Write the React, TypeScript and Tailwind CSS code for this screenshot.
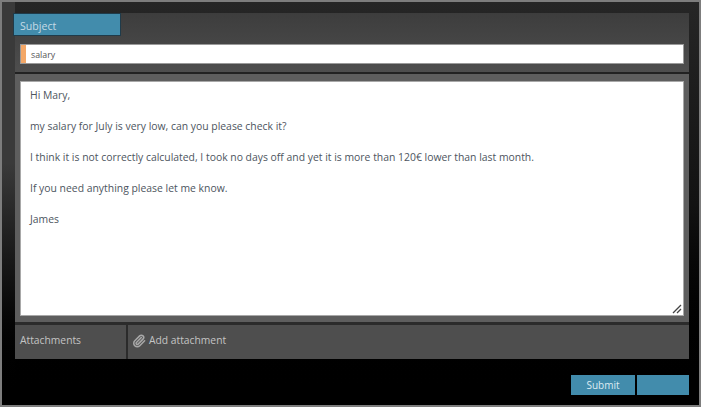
import { Paperclip } from "lucide-react";

const lines = [
  "Hi Mary,",
  "",
  "my salary for July is very low, can you please check it?",
  "",
  "I think it is not correctly calculated, I took no days off and yet it is more than 120€ lower than last month.",
  "",
  "If you need anything please let me know.",
  "",
  "James",
];

export default function App() {
  return (
    <div className="w-[702px] h-[408px] bg-white font-['Open_Sans',sans-serif] overflow-hidden">
      <div className="w-[701px] h-[407px] border-2 border-[#7d7d7d] bg-gradient-to-b from-[#262626] via-[#121212] to-[#000000] flex">
        <div className="w-[13px] h-full bg-gradient-to-b from-[#3a3a3a] via-[#3a3a3a] via-40% to-[#000000]" />
        <div className="pt-[11px] flex flex-col">
          <div className="flex flex-col">
            <div className="w-[674px] h-[59px] bg-gradient-to-b from-[#3d3d3d] to-[#4e4e4e] relative pt-[31px] px-[5px]">
              <div className="absolute -left-[2px] top-0 w-[108px] h-[23px] bg-[#428cac] border border-[#1f3b4a] text-[#c6dbe6] text-[10.6px] leading-[25px] pl-[6px]">
                Subject
              </div>
              <div className="w-[664px] h-[20px] bg-white border border-[#9a9a9a] text-[#555] text-[8.8px] leading-[21px] pl-[10px] relative">
                <div className="absolute left-0 top-0 w-[5px] h-full bg-[#f3a767]" />
                salary
              </div>
            </div>
            <div className="w-[674px] h-[2px] bg-[#222]" />
            <div className="w-[674px] h-[248px] bg-[#5e5e5e] px-[5px] pt-[7px]">
              <div className="relative w-[664px] h-[235px] bg-white border border-[#a8a8a8] pt-[6px] pl-[9px] text-[#4d5560] text-[10.4px] leading-[15.5px]">
                {lines.map((l, i) => (
                  <div key={i} className="h-[15.5px]">{l}</div>
                ))}
                <svg className="absolute right-[1px] bottom-[1px]" width="10" height="10" viewBox="0 0 10 10">
                  <path d="M1 9 L9 1 M5 9 L9 5" stroke="#444" strokeWidth="1.3" />
                </svg>
              </div>
            </div>
            <div className="w-[674px] h-[3px] bg-[#2b2b2b]" />
            <div className="w-[674px] h-[34px] bg-[#4e4e4e] flex items-center text-[#c4c4c4] text-[10.3px]">
              <div className="w-[113px] h-full border-r-2 border-[#2b2b2b] pl-[5px] pb-[2px] flex items-center">Attachments</div>
              <div className="flex items-center pl-[4px] pb-[2px] gap-[3px]">
                <Paperclip size={14} color="#a8a8a8" strokeWidth={2.6} />
                <span>Add attachment</span>
              </div>
            </div>
          </div>
          <div className="mt-[16px] w-[674px] flex justify-end gap-[2px]">
            <button className="w-[64px] h-[20px] bg-[#428cac] text-[#dcebf2] text-[10px]">Submit</button>
            <button className="w-[52px] h-[20px] bg-[#428cac]" />
          </div>
        </div>
      </div>
    </div>
  );
}
